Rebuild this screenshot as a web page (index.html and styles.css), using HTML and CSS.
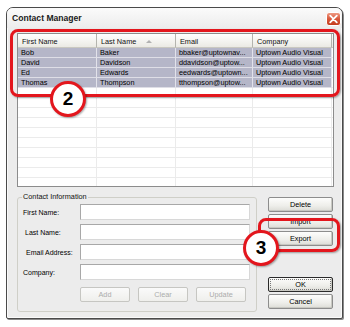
FILE: index.html
```html
<!DOCTYPE html>
<html>
<head>
<meta charset="utf-8">
<link rel="stylesheet" href="styles.css">
</head>
<body>
<div class="window">
  <div class="titlebar">
    <span class="title">Contact Manager</span>
    <svg class="close" width="15" height="14" viewBox="0 0 15 14">
      <defs>
        <linearGradient id="cg" x1="0" y1="0" x2="0" y2="1">
          <stop offset="0" stop-color="#f0a08a"/>
          <stop offset="0.5" stop-color="#d9573a"/>
          <stop offset="1" stop-color="#c23a1c"/>
        </linearGradient>
      </defs>
      <rect x="0.5" y="0.5" width="14" height="13" rx="2.5" fill="url(#cg)" stroke="#ffffff"/>
      <path d="M4.2 3.6 L10.8 10.4 M10.8 3.6 L4.2 10.4" stroke="#ffffff" stroke-width="1.8" stroke-linecap="round"/>
    </svg>
  </div>
  <div class="content">
    <div class="list">
      <div class="hcell">First Name</div>
      <div class="hcell">Last Name<span class="sort"></span></div>
      <div class="hcell">Email</div>
      <div class="hcell">Company</div>
      <div class="hcell hend"></div>

      <div class="cell sel">Bob</div><div class="cell sel">Baker</div><div class="cell sel">bbaker@uptownav...</div><div class="cell sel">Uptown Audio Visual</div><div class="cell end"></div>
      <div class="cell sel">David</div><div class="cell sel">Davidson</div><div class="cell sel">ddavidson@uptow...</div><div class="cell sel">Uptown Audio Visual</div><div class="cell end"></div>
      <div class="cell sel">Ed</div><div class="cell sel">Edwards</div><div class="cell sel">eedwards@uptown...</div><div class="cell sel">Uptown Audio Visual</div><div class="cell end"></div>
      <div class="cell sel">Thomas</div><div class="cell sel">Thompson</div><div class="cell sel">tthompson@uptow...</div><div class="cell sel">Uptown Audio Visual</div><div class="cell end"></div>

      <div class="cell"></div><div class="cell"></div><div class="cell"></div><div class="cell"></div><div class="cell end"></div>
      <div class="cell"></div><div class="cell"></div><div class="cell"></div><div class="cell"></div><div class="cell end"></div>
      <div class="cell"></div><div class="cell"></div><div class="cell"></div><div class="cell"></div><div class="cell end"></div>
      <div class="cell"></div><div class="cell"></div><div class="cell"></div><div class="cell"></div><div class="cell end"></div>
      <div class="cell"></div><div class="cell"></div><div class="cell"></div><div class="cell"></div><div class="cell end"></div>
      <div class="cell"></div><div class="cell"></div><div class="cell"></div><div class="cell"></div><div class="cell end"></div>
      <div class="cell"></div><div class="cell"></div><div class="cell"></div><div class="cell"></div><div class="cell end"></div>
      <div class="cell"></div><div class="cell"></div><div class="cell"></div><div class="cell"></div><div class="cell end"></div>
      <div class="cell"></div><div class="cell"></div><div class="cell"></div><div class="cell"></div><div class="cell end"></div>
      <div class="cell"></div><div class="cell"></div><div class="cell"></div><div class="cell"></div><div class="cell end"></div>
    </div>

    <div class="bottom">
      <fieldset class="group">
        <legend>Contact Information</legend>
        <div class="frow"><span class="lbl">First Name:</span><span class="input"></span></div>
        <div class="frow"><span class="lbl lbl-last">Last Name:</span><span class="input"></span></div>
        <div class="frow"><span class="lbl lbl-email">Email Address:</span><span class="input"></span></div>
        <div class="frow"><span class="lbl">Company:</span><span class="input"></span></div>
        <div class="brow">
          <button class="btn disabled">Add</button>
          <button class="btn disabled">Clear</button>
          <button class="btn disabled">Update</button>
        </div>
      </fieldset>
      <div class="side">
        <button class="btn">Delete</button>
        <button class="btn">Import</button>
        <button class="btn">Export</button>
        <button class="btn default ok">OK</button>
        <button class="btn">Cancel</button>
      </div>
    </div>
  </div>
</div>

<div class="mark mark-list"></div>
<div class="badge badge-2">2</div>
<div class="mark mark-export"></div>
<div class="badge badge-3">3</div>
</body>
</html>
```
FILE: styles.css
```css
* { box-sizing: border-box; }
html, body { margin: 0; padding: 0; }
body {
  background: #ffffff;
  font-family: "Liberation Sans", Arial, sans-serif;
  color: #000;
  padding: 7px 0 0 6px;
  position: relative;
  width: 350px;
  height: 327px;
  overflow: hidden;
}
.window {
  width: 337px;
  height: 312px;
  border: 1px solid #4a4a4a;
  border-radius: 7px 7px 2px 2px;
  background: #ececec;
  box-shadow: inset 0 0 0 1px #fafafa, 1px 1px 0 #8a8a8a;
  display: flex;
  flex-direction: column;
}
.titlebar {
  height: 20px;
  flex: none;
  display: flex;
  align-items: center;
  justify-content: space-between;
  padding: 0 1px 0 5px;
  background: linear-gradient(#fbfbfb, #ececec);
  border-radius: 6px 6px 0 0;
}
.title {
  font-weight: bold;
  font-size: 8.6px;
  color: #1a1a1a;
}
.close { display: block; margin-top: 1px; }
.content {
  padding: 5px 8px 0 10px;
  display: flex;
  flex-direction: column;
}
.list {
  height: 154px;
  border: 1px solid #8c8c8c;
  background: #fff;
  display: grid;
  grid-template-columns: 79px 79px 77px 79px 1fr;
  grid-auto-rows: 10px;
  grid-template-rows: 14px;
  overflow: hidden;
  font-size: 7.3px;
  line-height: 9px;
}
.hcell {
  background: linear-gradient(#ffffff, #ebeae4);
  border-right: 1px solid #b4b4ae;
  border-bottom: 1px solid #c9c8c0;
  padding: 3px 0 0 4px;
  white-space: nowrap;
  color: #111;
}
.hend { border-right: none; }
.sort {
  display: inline-block;
  width: 0;
  height: 0;
  border-left: 3px solid transparent;
  border-right: 3px solid transparent;
  border-bottom: 3px solid #b2b2b2;
  margin-left: 10px;
  vertical-align: 1px;
}
.cell {
  border-right: 1px solid #ebebeb;
  border-bottom: 1px solid #ebebeb;
  padding: 0 0 0 3px;
  white-space: nowrap;
  overflow: hidden;
}
.cell.sel {
  background: #b5b6c8;
  border-right-color: #e2e2ea;
  border-bottom-color: #dedee6;
}
.cell.end { border-right: none; }
.bottom {
  margin-top: 6px;
  display: grid;
  grid-template-columns: 240px 65px;
  column-gap: 11px;
}
.group {
  margin: 0;
  min-width: 0;
  border: 1px solid #cfcfc8;
  border-radius: 3px;
  padding: 0 3px 9px 5px;
}
.group legend {
  font-size: 7.3px;
  line-height: 8px;
  padding: 0 1px;
  margin-left: -1px;
  color: #111;
}
.frow {
  display: flex;
  align-items: center;
  height: 16px;
  margin-top: 4px;
}
.frow:first-of-type { margin-top: 3px; }
.lbl {
  width: 57px;
  flex: none;
  font-size: 7px;
}
.lbl-last { padding-left: 2px; }
.lbl-email { padding-left: 3px; }
.input {
  width: 170px;
  height: 16px;
  background: #fff;
  border: 1px solid #a8a8a8;
  border-right-color: #d8d8d8;
  border-bottom-color: #d8d8d8;
}
.brow {
  display: flex;
  gap: 8px;
  margin: 7px 0 0 57px;
}
.brow .btn { width: 50px; }
.btn {
  font-family: "Liberation Sans", Arial, sans-serif;
  font-size: 7.3px;
  height: 15px;
  padding: 0;
  margin: 0;
  color: #000;
  border: 1px solid #8d8d8d;
  border-radius: 2px;
  background: linear-gradient(#fdfdfc, #eeeeea 60%, #dcdcd6);
  box-shadow: inset -1px -1px 0 #c8c8c2;
}
.btn.disabled {
  color: #acacac;
  border-color: #c6c6c2;
  background: linear-gradient(#fafafa, #efefec);
  box-shadow: none;
}
.side {
  display: flex;
  flex-direction: column;
  gap: 2px;
  padding-top: 4px;
}
.side .btn { width: 65px; }
.btn.default {
  border-color: #2a2a2a;
  outline: 1px dotted #777;
  outline-offset: -3px;
}
.ok { margin-top: 29px; }

.mark {
  position: absolute;
  border: 3px solid #e3161d;
  border-radius: 8px;
  box-shadow: 1px 1px 2px rgba(0,0,0,0.35);
}
.mark-list { left: 10px; top: 29px; width: 330px; height: 68px; }
.mark-export { left: 258px; top: 218px; width: 82px; height: 34px; }
.badge {
  position: absolute;
  width: 36px;
  height: 36px;
  border: 3px solid #e3161d;
  border-radius: 50%;
  background: #fff;
  box-shadow: 1px 1px 2px rgba(0,0,0,0.35);
  font-weight: bold;
  font-size: 19px;
  line-height: 30px;
  text-align: center;
  color: #000;
}
.badge-2 { left: 50px; top: 81px; }
.badge-3 { left: 243px; top: 230px; }
```
